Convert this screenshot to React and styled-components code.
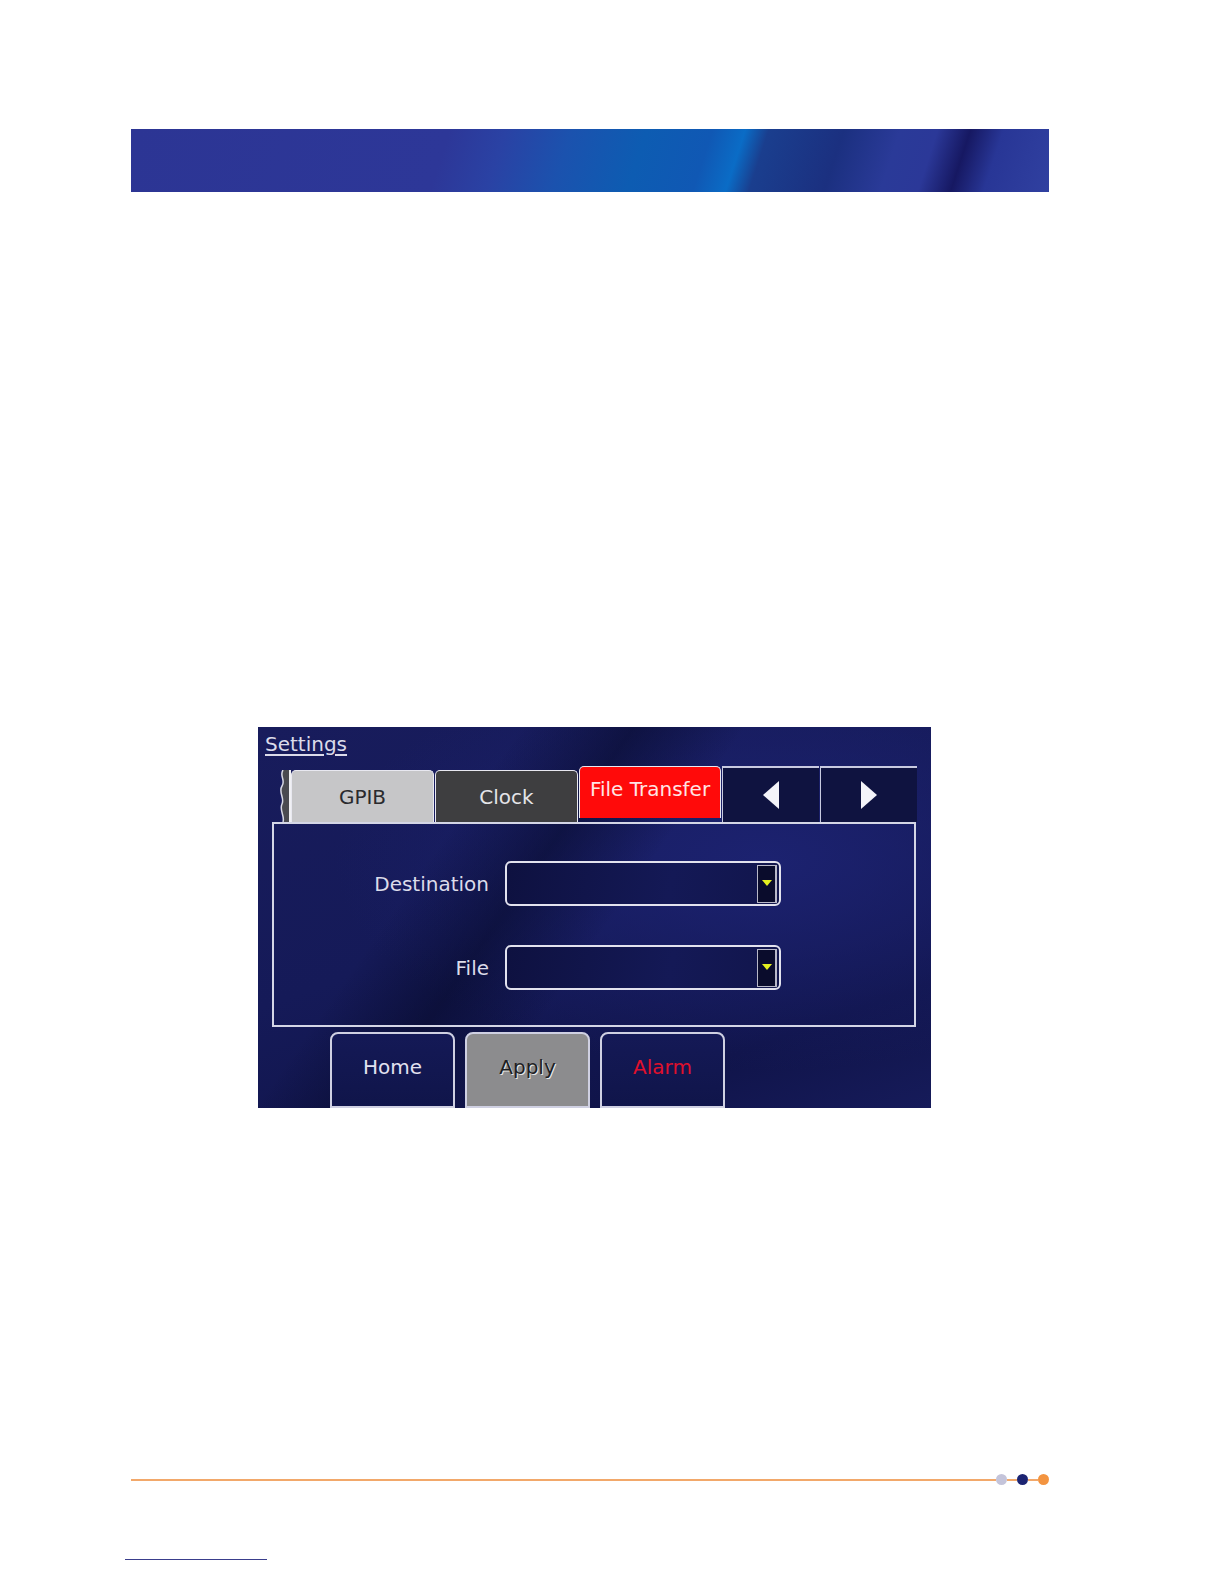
import React from 'react'
import styled, { createGlobalStyle } from 'styled-components'

const GlobalStyle = createGlobalStyle`
  body {
    margin: 0;
    background: #ffffff;
    font-family: 'DejaVu Sans', 'Liberation Sans', sans-serif;
  }
`

const Page = styled.div`
  width: 1224px;
  height: 1584px;
  box-sizing: border-box;
  padding: 129px 0 0 131px;
  display: flex;
  flex-direction: column;
  background: #fff;
`

const Banner = styled.div`
  width: 918px;
  height: 63px;
  background: linear-gradient(
    108deg,
    #2c3594 0%,
    #2d3798 34%,
    #2a42a4 40%,
    #1b52ae 47%,
    #0d5cb2 55%,
    #1058b4 62%,
    #0a6cc6 65.5%,
    #1a3e8e 68%,
    #1b3080 76%,
    #2a3a98 82%,
    #2b3898 86%,
    #161862 89.5%,
    #283696 93%,
    #3040a0 100%
  );
`

const Panel = styled.div`
  margin: 535px 0 0 127px;
  width: 673px;
  height: 381px;
  overflow: hidden;
  display: flex;
  flex-direction: column;
  background:
    linear-gradient(125deg, rgba(0,0,0,0) 28%, rgba(5,8,35,0.5) 40%, rgba(0,0,0,0) 52%),
    radial-gradient(ellipse at 75% 35%, #1c2270 0%, rgba(20,24,90,0) 60%),
    linear-gradient(160deg, #181c5c 0%, #151a58 45%, #10144a 80%, #161b5a 100%);
`

const Title = styled.div`
  margin: 5px 0 0 7px;
  line-height: 24px;
  font-size: 20px;
  color: #dcdcea;
  text-decoration: underline;
  text-underline-offset: 3px;
`

const TabRow = styled.div`
  margin: 10px 0 0 20px;
  height: 56px;
  display: flex;
  align-items: flex-end;
`

const TabEdge = styled.div`
  width: 13px;
  height: 52px;
  display: flex;
`

const Tab = styled.div`
  box-sizing: border-box;
  width: ${p => p.$w || 143}px;
  height: 52px;
  margin-right: 1px;
  border: 1px solid #e8e8f0;
  border-bottom: none;
  border-radius: 5px 5px 0 0;
  background: ${p => p.$bg};
  color: ${p => p.$fg};
  font-size: 20px;
  display: flex;
  justify-content: center;
  align-items: ${p => (p.$active ? 'flex-start' : 'center')};
  padding-top: ${p => (p.$active ? 10 : 0)}px;
  align-self: ${p => (p.$active ? 'flex-start' : 'flex-end')};
`

const ArrowTab = styled.div`
  box-sizing: border-box;
  width: ${p => p.$w}px;
  height: 56px;
  border-top: 2px solid #c8cae0;
  border-left: 1px solid #c8cae0;
  background: #0f1340;
  display: flex;
  align-items: center;
  justify-content: center;
  margin-right: 1px;
`

const ContentBox = styled.div`
  box-sizing: border-box;
  margin-left: 14px;
  width: 644px;
  height: 208px;
  border: 2px solid #d4d6e6;
  padding-top: 37px;
  display: grid;
  grid-template-columns: 215px 276px;
  grid-auto-rows: 45px;
  column-gap: 16px;
  row-gap: 39px;
  align-content: start;
`

const Label = styled.div`
  font-size: 20px;
  color: #dcdcea;
  text-align: right;
  align-self: center;
`

const Select = styled.div`
  box-sizing: border-box;
  border: 2px solid #e2e2ee;
  border-radius: 6px;
  background: linear-gradient(100deg, #0e1140 0%, #141956 60%, #11154c 100%);
  display: flex;
  justify-content: flex-end;
  align-items: center;
  padding-right: 2px;
`

const SelectButton = styled.div`
  box-sizing: border-box;
  width: 20px;
  height: 38px;
  border: 1px solid #b8b8c8;
  border-right-width: 2px;
  background: #0a0c2c;
  display: flex;
  align-items: center;
  justify-content: center;
`

const ButtonRow = styled.div`
  margin: 5px 0 0 72px;
  display: flex;
  gap: 10px;
`

const Button = styled.div`
  box-sizing: border-box;
  width: 125px;
  height: 76px;
  border: 2px solid #cfd0e2;
  border-radius: 8px 8px 0 0;
  background: ${p => p.$bg || 'linear-gradient(180deg, #141956 0%, #10154a 100%)'};
  color: ${p => p.$fg || '#e2e2f0'};
  text-shadow: ${p => p.$shadow || 'none'};
  font-size: 20px;
  display: flex;
  justify-content: center;
  padding-top: 21px;
`

const Footer = styled.div`
  margin-top: 366px;
  width: 918px;
  height: 11px;
  display: flex;
  align-items: center;
`

const FooterLine = styled.div`
  height: 2px;
  background: #f2a86a;
  flex: ${p => (p.$grow ? 1 : 'none')};
  width: ${p => p.$w || 0}px;
`

const Dot = styled.div`
  width: 11px;
  height: 11px;
  border-radius: 50%;
  background: ${p => p.$c};
`

const BottomRule = styled.div`
  margin: 74px 0 0 -6px;
  width: 142px;
  height: 1px;
  background: #3a3e8c;
`

const Wavy = () => (
  <svg width="13" height="52" viewBox="0 0 13 52">
    <path d="M5 0 C1 6 8 10 4 16 C0 22 7 28 4 34 C1 40 7 46 5 52 L13 52 L13 0 Z" fill="#4a4a50" />
    <path d="M5 0 C1 6 8 10 4 16 C0 22 7 28 4 34 C1 40 7 46 5 52" fill="none" stroke="#d8d8e4" strokeWidth="1.5" />
    <line x1="12" y1="0" x2="12" y2="52" stroke="#f0f0f4" strokeWidth="2" />
  </svg>
)

const Arrow = ({ dir }) => (
  <svg width="18" height="30" viewBox="0 0 18 30">
    {dir === 'left'
      ? <path d="M17 1 L17 29 L1 15 Z" fill="#f4f4fa" />
      : <path d="M1 1 L1 29 L17 15 Z" fill="#f4f4fa" />}
  </svg>
)

const DownTri = () => (
  <svg width="10" height="7" viewBox="0 0 10 7">
    <path d="M0 0 L10 0 L5 6 Z" fill="#e4f020" />
  </svg>
)

const fields = ['Destination', 'File']

const App = () => {
  return (
    <Page>
      <GlobalStyle />
      <Banner />
      <Panel>
        <Title>Settings</Title>
        <TabRow>
          <TabEdge><Wavy /></TabEdge>
          <Tab $bg="#c6c6c8" $fg="#2a2a2e">GPIB</Tab>
          <Tab $bg="#3e3e40" $fg="#e4e4e8">Clock</Tab>
          <Tab $bg="#ff0a0a" $fg="#ffe4e4" $active $w={142}>File Transfer</Tab>
          <ArrowTab $w={97}><Arrow dir="left" /></ArrowTab>
          <ArrowTab $w={97}><Arrow dir="right" /></ArrowTab>
        </TabRow>
        <ContentBox>
          {fields.map(f => (
            <React.Fragment key={f}>
              <Label>{f}</Label>
              <Select>
                <SelectButton><DownTri /></SelectButton>
              </Select>
            </React.Fragment>
          ))}
        </ContentBox>
        <ButtonRow>
          <Button>Home</Button>
          <Button $bg="#8c8c8e" $fg="#1e1e22" $shadow="1px 1px 0 #e8e8e8">Apply</Button>
          <Button $fg="#e0102c">Alarm</Button>
        </ButtonRow>
      </Panel>
      <Footer>
        <FooterLine $grow />
        <Dot $c="#c4c4da" />
        <FooterLine $w={10} />
        <Dot $c="#1c2472" />
        <FooterLine $w={10} />
        <Dot $c="#f39440" />
      </Footer>
      <BottomRule />
    </Page>
  )
}

export default App
